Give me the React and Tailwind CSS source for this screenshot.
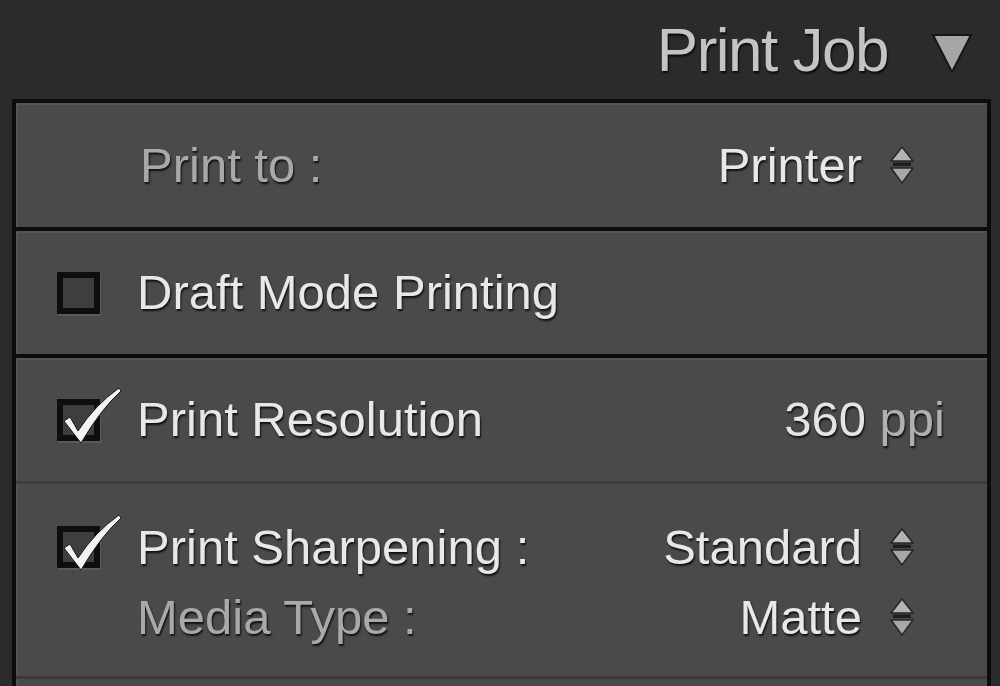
import React from 'react';

const font = { fontFamily: '"Liberation Sans", Arial, sans-serif' };

function Stepper() {
  return (
    <svg width="24" height="38" viewBox="0 0 24 38" className="ml-[28px] shrink-0">
      <polygon points="12,1 23,15 1,15" fill="#b4b4b4" stroke="#262626" strokeWidth="1.5" />
      <rect x="3" y="16.5" width="18" height="3.5" fill="#1e1e1e" />
      <polygon points="1,22 23,22 12,37" fill="#a8a8a8" stroke="#262626" strokeWidth="1.5" />
    </svg>
  );
}

function Checkbox({ checked }) {
  return (
    <div className="relative w-[43px] h-[42px] shrink-0 border-[6px] border-[#0e0e0e] bg-[#3e3e3e] shadow-[1px_2px_0_#5a5a5a]">
      {checked && (
        <svg
          width="70"
          height="60"
          viewBox="0 0 70 60"
          className="absolute left-[-6px] top-[-18px] overflow-visible"
        >
          <path
            d="M7 34 L13 30 L21 44 Q38 18 62 1 L64 4 Q44 22 24 56 Z"
            fill="#f2f2f2"
            stroke="#1a1a1a"
            strokeWidth="1"
          />
        </svg>
      )}
    </div>
  );
}

const shadow = '[text-shadow:1px_2px_2px_rgba(0,0,0,0.8)]';

export default function App() {
  return (
    <div className="w-[1000px] h-[686px] overflow-hidden bg-[#2b2b2b]" style={font}>
      {/* panel header */}
      <div className="h-[99px] flex items-center justify-end pr-[27px]">
        <span className="text-[62px] leading-none tracking-[-1.5px] text-[#c4c4c4] [text-shadow:1px_2px_2px_rgba(0,0,0,0.8)]">
          Print Job
        </span>
        <svg width="42" height="42" viewBox="0 0 42 42" className="ml-[43px] mt-[6px]">
          <polygon points="2,3 40,3 21,40" fill="#a6a6a6" stroke="#161616" strokeWidth="2" />
        </svg>
      </div>

      <div className="ml-[12px] mr-[9px] border-4 border-b-0 border-[#0c0c0c] bg-[#0c0c0c] flex flex-col gap-[4px]">
        {/* print to */}
        <div className="h-[124px] bg-[#4a4a4a] shadow-[inset_2px_2px_0_#555555] flex items-center pl-[124px] pr-[73px]">
          <span className={`text-[49px] leading-none text-[#a9a9a9] ${shadow}`}>Print to :</span>
          <span className={`ml-auto text-[49px] leading-none text-[#e8e8e8] ${shadow}`}>Printer</span>
          <Stepper />
        </div>

        {/* draft mode */}
        <div className="h-[123px] bg-[#4a4a4a] shadow-[inset_2px_2px_0_#555555] flex items-center pl-[41px]">
          <Checkbox />
          <span className={`ml-[37px] text-[49px] leading-none text-[#e8e8e8] ${shadow}`}>
            Draft Mode Printing
          </span>
        </div>

        {/* resolution + sharpening */}
        <div className="h-[400px] bg-[#4a4a4a] shadow-[inset_2px_2px_0_#555555] flex flex-col">
          <div className="h-[123px] shrink-0 flex items-center pl-[41px] pr-[42px]">
            <Checkbox checked />
            <span className={`ml-[37px] text-[49px] leading-none text-[#e8e8e8] ${shadow}`}>
              Print Resolution
            </span>
            <span className={`ml-auto text-[49px] leading-none text-[#e4e4e4] ${shadow}`}>
              360 <span className="text-[#b0b0b0]">ppi</span>
            </span>
          </div>
          <div className="h-[3px] shrink-0 bg-[#3d3d3d]" />
          <div className="h-[192px] shrink-0 flex flex-col pt-[28px]">
            <div className="h-[70px] flex items-center pl-[41px] pr-[73px]">
              <Checkbox checked />
              <span className={`ml-[37px] text-[49px] leading-none text-[#e8e8e8] ${shadow}`}>
                Print Sharpening :
              </span>
              <span className={`ml-auto text-[49px] leading-none text-[#e8e8e8] ${shadow}`}>Standard</span>
              <Stepper />
            </div>
            <div className="h-[70px] flex items-center pl-[121px] pr-[73px]">
              <span className={`text-[49px] leading-none text-[#a9a9a9] ${shadow}`}>Media Type :</span>
              <span className={`ml-auto text-[49px] leading-none text-[#e8e8e8] ${shadow}`}>Matte</span>
              <Stepper />
            </div>
          </div>
          <div className="h-[3px] shrink-0 bg-[#3a3a3a]" />
        </div>
      </div>
    </div>
  );
}
